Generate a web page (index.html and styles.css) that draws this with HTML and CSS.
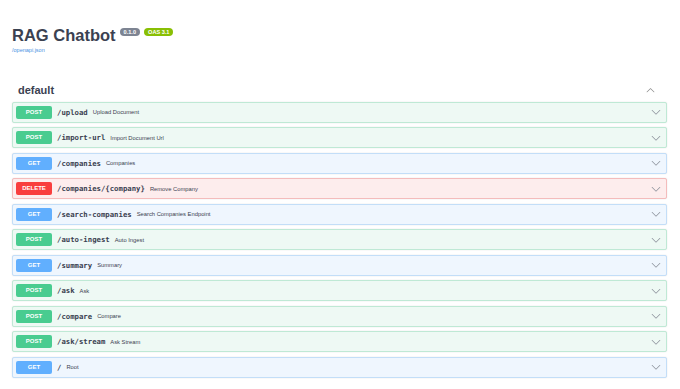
FILE: index.html
```html
<!DOCTYPE html>
<html lang="en">
<head>
    <meta charset="UTF-8">
    <meta name="viewport" content="width=device-width, initial-scale=1.0">
    <title>RAG Chatbot - Swagger UI</title>
    <link rel="stylesheet" href="styles.css">
</head>
<body>
    <div class="wrapper">
        <div class="info">
            <div class="title-row">
                <h2 class="title">RAG Chatbot</h2>
                <span class="stamp stamp-version">0.1.0</span>
                <span class="stamp stamp-oas">OAS 3.1</span>
            </div>
            <a class="spec-link" href="#">/openapi.json</a>
        </div>

        <div class="tag-header">
            <h3 class="tag-name">default</h3>
            <svg class="arrow-up" viewBox="0 0 20 20"><path d="M17.418 6.109c.272-.268.709-.268.979 0s.271.701 0 .969l-7.908 7.83c-.27.268-.707.268-.979 0l-7.908-7.83c-.27-.268-.27-.701 0-.969.271-.268.709-.268.979 0L10 13.25l7.418-7.141z"/></svg>
        </div>

        <div class="ops">
            <div class="op op-post">
                <span class="method">POST</span>
                <span class="path">/upload</span>
                <span class="desc">Upload Document</span>
                <svg class="arrow" viewBox="0 0 20 20"><path d="M17.418 6.109c.272-.268.709-.268.979 0s.271.701 0 .969l-7.908 7.83c-.27.268-.707.268-.979 0l-7.908-7.83c-.27-.268-.27-.701 0-.969.271-.268.709-.268.979 0L10 13.25l7.418-7.141z"/></svg>
            </div>
            <div class="op op-post">
                <span class="method">POST</span>
                <span class="path">/import-url</span>
                <span class="desc">Import Document Url</span>
                <svg class="arrow" viewBox="0 0 20 20"><path d="M17.418 6.109c.272-.268.709-.268.979 0s.271.701 0 .969l-7.908 7.83c-.27.268-.707.268-.979 0l-7.908-7.83c-.27-.268-.27-.701 0-.969.271-.268.709-.268.979 0L10 13.25l7.418-7.141z"/></svg>
            </div>
            <div class="op op-get">
                <span class="method">GET</span>
                <span class="path">/companies</span>
                <span class="desc">Companies</span>
                <svg class="arrow" viewBox="0 0 20 20"><path d="M17.418 6.109c.272-.268.709-.268.979 0s.271.701 0 .969l-7.908 7.83c-.27.268-.707.268-.979 0l-7.908-7.83c-.27-.268-.27-.701 0-.969.271-.268.709-.268.979 0L10 13.25l7.418-7.141z"/></svg>
            </div>
            <div class="op op-delete">
                <span class="method">DELETE</span>
                <span class="path">/companies/{company}</span>
                <span class="desc">Remove Company</span>
                <svg class="arrow" viewBox="0 0 20 20"><path d="M17.418 6.109c.272-.268.709-.268.979 0s.271.701 0 .969l-7.908 7.83c-.27.268-.707.268-.979 0l-7.908-7.83c-.27-.268-.27-.701 0-.969.271-.268.709-.268.979 0L10 13.25l7.418-7.141z"/></svg>
            </div>
            <div class="op op-get">
                <span class="method">GET</span>
                <span class="path">/search-companies</span>
                <span class="desc">Search Companies Endpoint</span>
                <svg class="arrow" viewBox="0 0 20 20"><path d="M17.418 6.109c.272-.268.709-.268.979 0s.271.701 0 .969l-7.908 7.83c-.27.268-.707.268-.979 0l-7.908-7.83c-.27-.268-.27-.701 0-.969.271-.268.709-.268.979 0L10 13.25l7.418-7.141z"/></svg>
            </div>
            <div class="op op-post">
                <span class="method">POST</span>
                <span class="path">/auto-ingest</span>
                <span class="desc">Auto Ingest</span>
                <svg class="arrow" viewBox="0 0 20 20"><path d="M17.418 6.109c.272-.268.709-.268.979 0s.271.701 0 .969l-7.908 7.83c-.27.268-.707.268-.979 0l-7.908-7.83c-.27-.268-.27-.701 0-.969.271-.268.709-.268.979 0L10 13.25l7.418-7.141z"/></svg>
            </div>
            <div class="op op-get">
                <span class="method">GET</span>
                <span class="path">/summary</span>
                <span class="desc">Summary</span>
                <svg class="arrow" viewBox="0 0 20 20"><path d="M17.418 6.109c.272-.268.709-.268.979 0s.271.701 0 .969l-7.908 7.83c-.27.268-.707.268-.979 0l-7.908-7.83c-.27-.268-.27-.701 0-.969.271-.268.709-.268.979 0L10 13.25l7.418-7.141z"/></svg>
            </div>
            <div class="op op-post">
                <span class="method">POST</span>
                <span class="path">/ask</span>
                <span class="desc">Ask</span>
                <svg class="arrow" viewBox="0 0 20 20"><path d="M17.418 6.109c.272-.268.709-.268.979 0s.271.701 0 .969l-7.908 7.83c-.27.268-.707.268-.979 0l-7.908-7.83c-.27-.268-.27-.701 0-.969.271-.268.709-.268.979 0L10 13.25l7.418-7.141z"/></svg>
            </div>
            <div class="op op-post">
                <span class="method">POST</span>
                <span class="path">/compare</span>
                <span class="desc">Compare</span>
                <svg class="arrow" viewBox="0 0 20 20"><path d="M17.418 6.109c.272-.268.709-.268.979 0s.271.701 0 .969l-7.908 7.83c-.27.268-.707.268-.979 0l-7.908-7.83c-.27-.268-.27-.701 0-.969.271-.268.709-.268.979 0L10 13.25l7.418-7.141z"/></svg>
            </div>
            <div class="op op-post">
                <span class="method">POST</span>
                <span class="path">/ask/stream</span>
                <span class="desc">Ask Stream</span>
                <svg class="arrow" viewBox="0 0 20 20"><path d="M17.418 6.109c.272-.268.709-.268.979 0s.271.701 0 .969l-7.908 7.83c-.27.268-.707.268-.979 0l-7.908-7.83c-.27-.268-.27-.701 0-.969.271-.268.709-.268.979 0L10 13.25l7.418-7.141z"/></svg>
            </div>
            <div class="op op-get">
                <span class="method">GET</span>
                <span class="path">/</span>
                <span class="desc">Root</span>
                <svg class="arrow" viewBox="0 0 20 20"><path d="M17.418 6.109c.272-.268.709-.268.979 0s.271.701 0 .969l-7.908 7.83c-.27.268-.707.268-.979 0l-7.908-7.83c-.27-.268-.27-.701 0-.969.271-.268.709-.268.979 0L10 13.25l7.418-7.141z"/></svg>
            </div>
        </div>
    </div>
</body>
</html>
```

FILE: styles.css
```css
body {
    margin: 0;
    background: #fff;
    font-family: "Liberation Sans", Arial, sans-serif;
    color: #3b4151;
}
.wrapper {
    padding: 26px 13px 0 12px;
}
.title-row {
    display: flex;
    align-items: flex-start;
}
.title {
    margin: 0;
    font-size: 16.5px;
    font-weight: bold;
    line-height: 19px;
    color: #3b4151;
}
.stamp {
    margin-top: 2px;
    padding: 0 4px;
    height: 8px;
    line-height: 8px;
    border-radius: 4px;
    font-size: 5.6px;
    font-weight: bold;
    color: #fff;
}
.stamp-version {
    margin-left: 4px;
    background: #7d8492;
}
.stamp-oas {
    margin-left: 4px;
    background: #89bf04;
}
.spec-link {
    display: block;
    margin-top: 2px;
    font-size: 5.5px;
    line-height: 7px;
    color: #4990e2;
    text-decoration: none;
}
.tag-header {
    display: flex;
    align-items: center;
    justify-content: space-between;
    margin-top: 29px;
    padding: 0 12px 0 6px;
    height: 14px;
}
.tag-name {
    margin: 0;
    font-size: 11px;
    font-weight: bold;
    color: #3b4151;
}
.arrow-up {
    width: 9px;
    height: 9px;
    fill: #888;
    transform: rotate(180deg);
}
.ops {
    margin-top: 4.5px;
}
.op {
    display: flex;
    align-items: center;
    box-sizing: border-box;
    height: 21px;
    margin-bottom: 4.5px;
    padding: 0 5px 0 3px;
    border: 1px solid;
    border-radius: 2px;
    box-shadow: 0 0 1.5px rgba(0, 0, 0, 0.12);
}
.method {
    width: 36px;
    height: 13px;
    line-height: 13px;
    border-radius: 2px;
    text-align: center;
    font-size: 6px;
    font-weight: bold;
    color: #fff;
}
.path {
    margin-left: 5px;
    font-family: "DejaVu Sans Mono", "Liberation Mono", monospace;
    font-size: 7.3px;
    font-weight: bold;
    color: #3b4151;
}
.desc {
    flex: 1;
    margin-left: 5px;
    font-size: 5.8px;
    color: #3b4151;
}
.arrow {
    width: 10px;
    height: 10px;
    fill: #8a8f99;
}
.op-post {
    background: #eef9f4;
    border-color: #bfe9d5;
}
.op-post .method {
    background: #49cc90;
}
.op-get {
    background: #eff6fe;
    border-color: #c3def8;
}
.op-get .method {
    background: #61affe;
}
.op-delete {
    background: #fdeded;
    border-color: #f4bcbc;
}
.op-delete .method {
    background: #f93e3e;
}
```
